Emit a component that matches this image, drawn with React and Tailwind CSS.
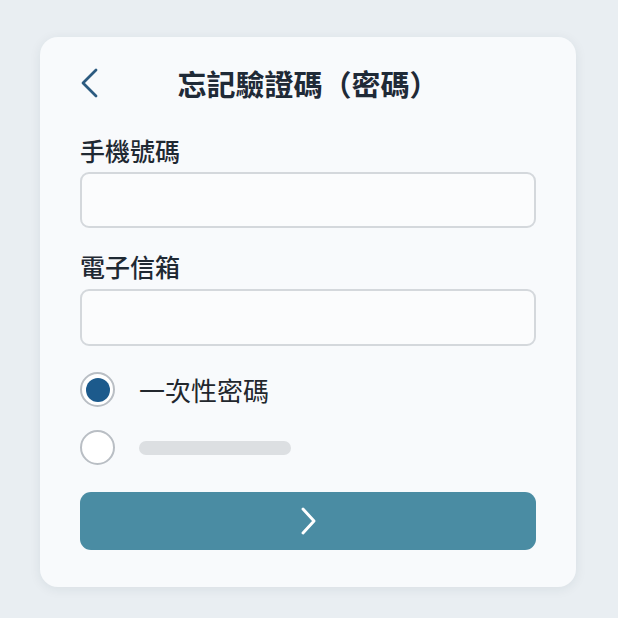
import React, { useState } from 'react';

const font = { fontFamily: '"Noto Sans CJK TC", "Noto Sans CJK SC", "Noto Sans", sans-serif' };

function Radio({ checked, onClick }) {
    return (
        <button
            onClick={onClick}
            className="w-[35px] h-[35px] rounded-full border-2 border-[#b9bec4] bg-white flex items-center justify-center shrink-0"
        >
            {checked && <span className="w-[24px] h-[24px] rounded-full bg-[#1c5a8c]" />}
        </button>
    );
}

export default function App() {
    const [mode, setMode] = useState('otp');

    return (
        <div className="min-h-screen bg-[#e9eef2] pt-[37px] pl-[40px]" style={font}>
            <div className="w-[536px] h-[550px] rounded-[18px] bg-[#f8fafc] shadow-[0_2px_12px_rgba(30,50,70,0.08)] px-[40px] pt-[22px]">
                <header className="grid grid-cols-[40px_1fr_40px] items-center h-[48px]">
                    <button className="flex items-center text-[#2c5b80]">
                        <svg width="22" height="32" viewBox="0 0 22 32" fill="none">
                            <path d="M16 3 L3 16 L16 29" stroke="currentColor" strokeWidth="2.8" strokeLinecap="round" strokeLinejoin="round" />
                        </svg>
                    </button>
                    <h1 className="text-center text-[29px] font-bold text-[#1f2a37] leading-none whitespace-nowrap">忘記驗證碼（密碼）</h1>
                    <div />
                </header>

                <label className="block mt-[27px] text-[25px] leading-[32px] font-medium text-[#1f2933]">手機號碼</label>
                <input className="mt-[6px] w-full h-[56px] rounded-[9px] border-2 border-[#d4d8dc] bg-[#fbfcfd] outline-none px-4" />

                <label className="block mt-[22px] text-[25px] leading-[32px] font-medium text-[#1f2933]">電子信箱</label>
                <input className="mt-[7px] w-full h-[57px] rounded-[9px] border-2 border-[#d4d8dc] bg-[#fbfcfd] outline-none px-4" />

                <div className="mt-[26px] flex items-center gap-[24px] h-[35px]">
                    <Radio checked={mode === 'otp'} onClick={() => setMode('otp')} />
                    <span className="text-[26px] text-[#22272d] leading-none">一次性密碼</span>
                </div>
                <div className="mt-[23px] flex items-center gap-[24px] h-[35px]">
                    <Radio checked={mode === 'other'} onClick={() => setMode('other')} />
                    <span className="w-[152px] h-[14px] rounded-full bg-[#dcdfe2]" />
                </div>

                <button className="mt-[27px] w-full h-[58px] rounded-[11px] bg-[#4a8ca3] flex items-center justify-center">
                    <svg width="20" height="30" viewBox="0 0 20 30" fill="none">
                        <path d="M5 3 L16 15 L5 27" stroke="white" strokeWidth="2.9" strokeLinecap="round" strokeLinejoin="round" />
                    </svg>
                </button>
            </div>
        </div>
    );
}
